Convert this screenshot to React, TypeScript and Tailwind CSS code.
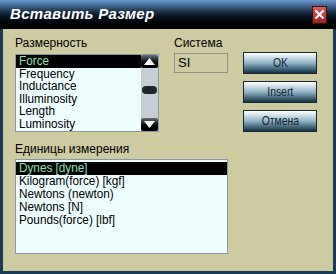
import React from "react";

const sizes = ["Force", "Frequency", "Inductance", "Illuminosity", "Length", "Luminosity"];
const units = ["Dynes [dyne]", "Kilogram(force) [kgf]", "Newtons (newton)", "Newtons [N]", "Pounds(force) [lbf]"];

const font = { fontFamily: '"Liberation Sans", Arial, sans-serif' };

function Row({ text, selected, tight }: { text: string; selected: boolean; tight?: boolean }) {
  return (
    <div
      className={
        (tight ? "h-[12.5px] leading-[12.5px] " : "h-[13px] leading-[13px] ") +
        "pl-[3px] text-[12.5px] whitespace-nowrap " +
        (selected ? "bg-black text-[#8fe0b0]" : "text-black")
      }
    >
      <span className="inline-block origin-left scale-x-[0.94]">{text}</span>
    </div>
  );
}

function ScrollButton({ up }: { up: boolean }) {
  return (
    <div className="flex h-[13px] w-[17px] items-center justify-center rounded-[2px] bg-gradient-to-b from-[#6a7078] via-[#101418] to-black">
      <svg width="11" height="7" viewBox="0 0 11 7">
        <polygon points={up ? "0,7 11,7 5.5,0" : "0,0 11,0 5.5,7"} fill="#fff" />
      </svg>
    </div>
  );
}

function WinButton({ label }: { label: string }) {
  return (
    <button className="flex h-[22px] w-[74px] items-center justify-center border border-[#16262e] bg-gradient-to-b from-[#ffffff] via-[#8fb4c8] to-[#163548] text-[13px] text-[#142230]">
      <span className="inline-block scale-x-[0.8]">{label}</span>
    </button>
  );
}

export default function App() {
  return (
    <div className="flex h-[274px] w-[336px] flex-col bg-[#1b3a55]" style={font}>
      <div className="flex h-[29px] items-center justify-between bg-gradient-to-b from-[#6a9bd0] via-[#0c1c2c] to-black pl-[10px] pr-[9px]">
        <span className="text-[15px] font-bold italic tracking-[0.3px] text-white">Вставить Размер</span>
        <div className="flex h-[18px] w-[15px] items-center justify-center border border-[#401010] bg-gradient-to-b from-[#d86060] to-[#9a2020]">
          <svg width="11" height="11" viewBox="0 0 11 11">
            <path d="M1.5 1.5 L9.5 9.5 M9.5 1.5 L1.5 9.5" stroke="#fff" strokeWidth="2" />
          </svg>
        </div>
      </div>

      <div className="mx-[3px] mb-[3px] flex-1 bg-[#cdcb9f] pl-[12px] pt-[8px]">
        <div className="flex">
          <div className="w-[144px]">
            <div className="h-[17px] text-[12px] leading-[13px] text-black">Размерность</div>
            <div className="flex h-[78px] overflow-hidden border border-[#8898a4] bg-[#eefeff]">
              <div className="flex-1 overflow-hidden">
                {sizes.map((s, i) => (
                  <Row key={s} text={s} selected={i === 0} tight />
                ))}
              </div>
              <div className="flex w-[17px] flex-col items-center bg-[#c6cdd4]">
                <ScrollButton up />
                <div className="mt-[18px] h-[8px] w-[15px] rounded-full bg-[#1e262c]" />
                <div className="flex-1" />
                <ScrollButton up={false} />
              </div>
            </div>
          </div>

          <div className="ml-[15px] w-[54px]">
            <div className="h-[14px] text-[12px] leading-[13px] text-black">Система</div>
            <div className="mt-[2px] flex h-[20px] items-center border border-[#8e948c] pl-[3px] text-[13px] text-black">
              SI
            </div>
          </div>

          <div className="ml-[15px] mt-[15px] flex flex-col gap-[7px]">
            <WinButton label="OK" />
            <WinButton label="Insert" />
            <WinButton label="Отмена" />
          </div>
        </div>

        <div className="mt-[11px] h-[16px] text-[12px] leading-[13px] text-black">Единицы измерения</div>
        <div className="h-[95px] w-[213px] border border-[#8898a4] bg-[#eefeff] pt-[2px]">
          {units.map((u, i) => (
            <Row key={u} text={u} selected={i === 0} />
          ))}
        </div>
      </div>
    </div>
  );
}
